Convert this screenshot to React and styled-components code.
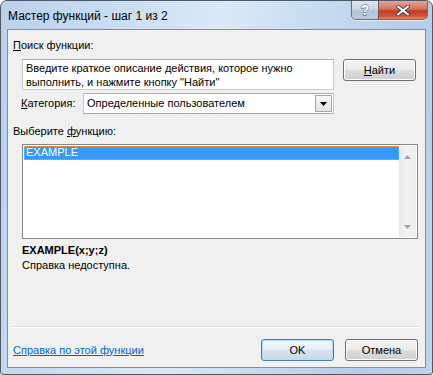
import React from "react";
import styled, { createGlobalStyle } from "styled-components";

const GlobalStyle = createGlobalStyle`
  html, body {
    margin: 0;
    padding: 0;
    background: #ffffff;
  }
  * {
    box-sizing: border-box;
  }
`;

const uiFont = `"Liberation Sans", Arial, sans-serif`;

const Window = styled.div`
  width: 433px;
  height: 375px;
  border: 1px solid #4d5966;
  border-radius: 7px 7px 3px 3px;
  background: linear-gradient(
    100deg,
    #b9d1ea 0%,
    #c9def3 25%,
    #dbe9f7 45%,
    #c5dbf1 65%,
    #b4cde8 85%,
    #bcd4ee 100%
  );
  display: flex;
  flex-direction: column;
  overflow: hidden;
  font-family: ${uiFont};
`;

const TitleBar = styled.div`
  height: 28px;
  display: flex;
  align-items: flex-start;
  padding-left: 7px;
  padding-right: 4px;
`;

const Title = styled.div`
  font-size: 12px;
  line-height: 14px;
  margin-top: 8px;
  color: #000;
  white-space: nowrap;
`;

const CaptionButtons = styled.div`
  margin-left: auto;
  display: flex;
  height: 19px;
  border: 1px solid #5f6f82;
  border-top: none;
  border-radius: 0 0 5px 5px;
  overflow: hidden;
  box-shadow: 0 1px 0 rgba(255, 255, 255, 0.6);
`;

const CaptionButton = styled.div`
  width: ${p => p.$w}px;
  height: 100%;
  display: flex;
  align-items: center;
  justify-content: center;
  background: ${p =>
    p.$close
      ? "linear-gradient(180deg, #e8a493 0%, #d5735d 45%, #c23b22 55%, #d0583c 85%, #e08b6c 100%)"
      : "linear-gradient(180deg, #dfe8f1 0%, #c8d5e3 45%, #b1c3d6 55%, #bcccdc 100%)"};
  border-left: ${p => (p.$close ? "1px solid #6b5450" : "none")};
  color: #fff;
  font-family: ${uiFont};
  font-weight: bold;
  font-size: 14px;
  -webkit-text-stroke: 0.8px #3b4350;
  paint-order: stroke fill;
`;

const Client = styled.div`
  margin: 0 6px 6px 6px;
  height: 339px;
  border: 1px solid #7f8f9f;
  background: #f0f0f0;
  padding: 9px 5px 0 5px;
  display: flex;
  flex-direction: column;
  font-size: 11px;
  color: #000;
`;

const Label = styled.div`
  font-size: 11px;
  line-height: 13px;
  white-space: nowrap;
  margin-left: ${p => p.$indent || 0}px;
  margin-top: ${p => p.$top || 0}px;
  font-weight: ${p => (p.$bold ? "bold" : "normal")};
  u {
    text-decoration: underline;
  }
`;

const Row = styled.div`
  display: flex;
  align-items: ${p => p.$align || "center"};
  margin-top: ${p => p.$top || 0}px;
  padding-left: ${p => p.$indent || 0}px;
`;

const TextBox = styled.div`
  width: 312px;
  height: 31px;
  background: #fff;
  border: 1px solid #abadb3;
  border-left-color: #c3c7cd;
  border-right-color: #c3c7cd;
  border-bottom-color: #c9ccd1;
  padding: 1px 3px;
  font-size: 11px;
  line-height: 14px;
`;

const Button = styled.div`
  width: 73px;
  height: 22px;
  margin-left: ${p => p.$left || 0}px;
  border: 1px solid ${p => (p.$default ? "#3c7fb1" : "#707070")};
  border-radius: 3px;
  background: ${p =>
    p.$default
      ? "linear-gradient(180deg, #f0f6fa 0%, #e5eef5 48%, #d6e3ee 52%, #c8d8e6 100%)"
      : "linear-gradient(180deg, #f2f2f2 0%, #ebebeb 48%, #dddddd 52%, #cfcfcf 100%)"};
  box-shadow: inset 0 0 0 1px ${p => (p.$default ? "#b5dcf5" : "#fcfcfc")};
  display: flex;
  align-items: center;
  justify-content: center;
  font-size: 11px;
  line-height: 13px;
  padding-top: 1px;
`;

const CategoryLabel = styled(Label)`
  width: 62px;
`;

const Select = styled.div`
  width: 251px;
  height: 21px;
  background: #fff;
  border: 1px solid #abadb3;
  border-left-color: #c3c7cd;
  border-right-color: #c3c7cd;
  display: flex;
  align-items: center;
  padding: 1px;
`;

const SelectValue = styled.div`
  flex: 1;
  padding-left: 2px;
  font-size: 11px;
  line-height: 13px;
`;

const DropButton = styled.div`
  width: 17px;
  height: 17px;
  border: 1px solid #a6a6a6;
  background: linear-gradient(180deg, #f5f5f5 0%, #e4e4e4 100%);
  display: flex;
  align-items: center;
  justify-content: center;
`;

const ListBox = styled.div`
  margin-top: 6px;
  margin-left: 9px;
  width: 396px;
  height: 95px;
  border: 1px solid #828790;
  background: #fff;
  display: flex;
  padding: 1px;
`;

const ListItems = styled.div`
  flex: 1;
`;

const ListItem = styled.div`
  height: 14px;
  line-height: 13px;
  padding-left: 2px;
  font-size: 11px;
  color: ${p => (p.$selected ? "#fff" : "#000")};
  background: ${p => (p.$selected ? "#3399ff" : "transparent")};
  outline: ${p => (p.$selected ? "1px dotted #f5a04a" : "none")};
  outline-offset: -1px;
`;

const ScrollBar = styled.div`
  width: 17px;
  background: linear-gradient(90deg, #e9e9e9 0%, #f2f2f2 50%, #ececec 100%);
  display: flex;
  flex-direction: column;
  justify-content: space-between;
  align-items: center;
  padding: 9px 0 8px;
`;

const Separator = styled.div`
  margin-top: ${p => p.$top}px;
  height: 1px;
  background: #d5dfe5;
  box-shadow: 0 1px 0 #ffffff;
`;

const Footer = styled.div`
  margin-top: 12px;
  display: flex;
  align-items: center;
  padding-right: 2px;
`;

const HelpLink = styled.a`
  font-size: 11px;
  line-height: 13px;
  color: #0066cc;
  text-decoration: underline;
  margin-right: auto;
  cursor: pointer;
`;

const Arrow = ({ up, color = "#000", w = 7, h = 4 }) => (
  <svg width={w} height={h} viewBox={`0 0 ${w} ${h}`}>
    <polygon
      points={up ? `0,${h} ${w},${h} ${w / 2},0` : `0,0 ${w},0 ${w / 2},${h}`}
      fill={color}
    />
  </svg>
);

const CloseGlyph = () => (
  <svg width="14" height="11" viewBox="0 0 14 11">
    <path
      d="M2 1.5 L12 9.5 M12 1.5 L2 9.5"
      stroke="#3b4350"
      strokeWidth="3.6"
      strokeLinecap="round"
    />
    <path
      d="M2 1.5 L12 9.5 M12 1.5 L2 9.5"
      stroke="#ffffff"
      strokeWidth="2"
      strokeLinecap="round"
    />
  </svg>
);

export default function App() {
  return (
    <>
      <GlobalStyle />
      <Window>
        <TitleBar>
          <Title>Мастер функций - шаг 1 из 2</Title>
          <CaptionButtons>
            <CaptionButton $w={26}>?</CaptionButton>
            <CaptionButton $w={49} $close>
              <CloseGlyph />
            </CaptionButton>
          </CaptionButtons>
        </TitleBar>
        <Client>
          <Label>
            <u>П</u>оиск функции:
          </Label>
          <Row $top={7} $indent={9} $align="flex-start">
            <TextBox>
              Введите краткое описание действия, которое нужно выполнить, и нажмите кнопку "Найти"
            </TextBox>
            <Button $left={9}>
              <span>
                <u>Н</u>айти
              </span>
            </Button>
          </Row>
          <Row $top={3} $indent={8}>
            <CategoryLabel>
              <u>К</u>атегория:
            </CategoryLabel>
            <Select>
              <SelectValue>Определенные пользователем</SelectValue>
              <DropButton>
                <Arrow />
              </DropButton>
            </Select>
          </Row>
          <Label $top={11}>
            Выберите <u>ф</u>ункцию:
          </Label>
          <ListBox>
            <ListItems>
              <ListItem $selected>EXAMPLE</ListItem>
            </ListItems>
            <ScrollBar>
              <Arrow up color="#a3a3a3" />
              <Arrow color="#a3a3a3" />
            </ScrollBar>
          </ListBox>
          <Label $bold $indent={9} $top={5}>
            EXAMPLE(x;y;z)
          </Label>
          <Label $indent={9} $top={2}>
            Справка недоступна.
          </Label>
          <Separator $top={54} />
          <Footer>
            <HelpLink>Справка по этой функции</HelpLink>
            <Button $default>OK</Button>
            <Button $left={11}>Отмена</Button>
          </Footer>
        </Client>
      </Window>
    </>
  );
}
